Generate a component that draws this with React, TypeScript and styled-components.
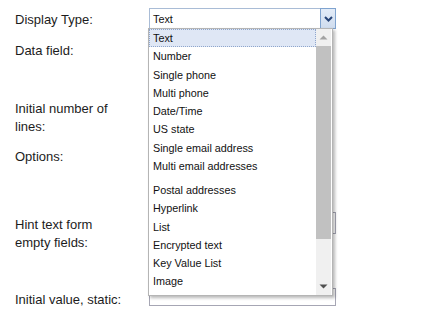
import React from "react";
import styled, { createGlobalStyle } from "styled-components";

const Global = createGlobalStyle`
  html, body { margin: 0; padding: 0; background: #fff; }
  body { font-family: "Liberation Sans", Arial, sans-serif; color: #1e1e1e; }
`;

const Page = styled.div`
  padding: 11px 0 0 15px;
  display: flex;
  flex-direction: column;
`;

const Row = styled.div<{ $h: number }>`
  display: grid;
  grid-template-columns: 134px 187px;
  height: ${(p) => p.$h}px;
  align-items: start;
`;

const Label = styled.div`
  width: 112px;
  font-size: 13px;
  line-height: 18px;
  color: #1c1c1c;
`;

const Field = styled.div<{ $off: number }>`
  position: relative;
  margin-top: ${(p) => p.$off}px;
`;

const SelectBox = styled.div`
  box-sizing: border-box;
  height: 21px;
  border: 1px solid #a9bcd6;
  display: flex;
  align-items: center;
  background: #fff;
`;

const SelectValue = styled.div`
  flex: 1;
  padding-left: 3px;
  padding-top: 1px;
  font-size: 10.8px;
  color: #111;
`;

const ArrowBtn = styled.div`
  box-sizing: border-box;
  width: 16px;
  height: 21px;
  margin: -1px -1px -1px 0;
  border: 1px solid #7fa3cf;
  background: linear-gradient(#e3ecf8, #cfdcee);
  display: flex;
  align-items: center;
  justify-content: center;
`;

const Input = styled.div<{ $h: number }>`
  box-sizing: border-box;
  height: ${(p) => p.$h}px;
  border: 1px solid #a6a6b4;
  background: #fff;
`;

const Dropdown = styled.div`
  position: absolute;
  z-index: 5;
  top: 20px;
  left: -1px;
  width: 185px;
  height: 268px;
  box-sizing: border-box;
  border: 1px solid #b5b5b5;
  background: #fff;
  box-shadow: 2px 2px 3px rgba(0, 0, 0, 0.28);
  display: flex;
`;

const List = styled.div`
  flex: 1;
  display: flex;
  flex-direction: column;
`;

const Item = styled.div<{ $sel?: boolean; $gap?: boolean }>`
  box-sizing: border-box;
  height: 18.3px;
  padding-top: 1px;
  line-height: 15.3px;
  padding-left: 3px;
  font-size: 10.8px;
  color: #111;
  margin-top: ${(p) => (p.$gap ? 5.6 : 0)}px;
  border: 1px ${(p) => (p.$sel ? "dotted #8fa6cc" : "solid transparent")};
  background: ${(p) => (p.$sel ? "#dfe7f5" : "transparent")};
`;

const Scrollbar = styled.div`
  width: 15px;
  margin-right: 1px;
  background: #f0f0f0;
  display: flex;
  flex-direction: column;
  align-items: center;
`;

const ScrollArrow = styled.div`
  height: 17px;
  display: flex;
  align-items: center;
  justify-content: center;
`;

const Thumb = styled.div`
  width: 15px;
  height: 193px;
  background: #c1c1c1;
`;

const Spacer = styled.div`
  flex: 1;
`;

const options = [
  "Text",
  "Number",
  "Single phone",
  "Multi phone",
  "Date/Time",
  "US state",
  "Single email address",
  "Multi email addresses",
  "Postal addresses",
  "Hyperlink",
  "List",
  "Encrypted text",
  "Key Value List",
  "Image",
];

export default function App() {
  return (
    <>
      <Global />
      <Page>
        <Row $h={31}>
          <Label>Display Type:</Label>
          <Field $off={-3}>
            <SelectBox>
              <SelectValue>Text</SelectValue>
              <ArrowBtn>
                <svg width="9" height="6" viewBox="0 0 9 6">
                  <path d="M1 1 L4.5 4.5 L8 1" fill="none" stroke="#274477" strokeWidth="2" />
                </svg>
              </ArrowBtn>
            </SelectBox>
            <Dropdown>
              <List>
                {options.map((o, i) => (
                  <Item key={o} $sel={i === 0} $gap={o === "Postal addresses"}>
                    {o}
                  </Item>
                ))}
              </List>
              <Scrollbar>
                <ScrollArrow>
                  <svg width="9" height="5" viewBox="0 0 9 5">
                    <path d="M0.5 4.5 L4.5 0.5 L8.5 4.5 Z" fill="#a3a3a3" />
                  </svg>
                </ScrollArrow>
                <Thumb />
                <Spacer />
                <ScrollArrow>
                  <svg width="9" height="5" viewBox="0 0 9 5">
                    <path d="M0.5 0.5 L8.5 0.5 L4.5 4.5 Z" fill="#505050" />
                  </svg>
                </ScrollArrow>
              </Scrollbar>
            </Dropdown>
          </Field>
        </Row>
        <Row $h={58}>
          <Label>Data field:</Label>
        </Row>
        <Row $h={48}>
          <Label>Initial number of lines:</Label>
        </Row>
        <Row $h={68}>
          <Label>Options:</Label>
        </Row>
        <Row $h={75}>
          <Label>Hint text form empty fields:</Label>
          <Field $off={-4}>
            <Input $h={22} />
          </Field>
        </Row>
        <Row $h={26}>
          <Label>Initial value, static:</Label>
          <Field $off={-3}>
            <Input $h={18} />
          </Field>
        </Row>
      </Page>
    </>
  );
}
